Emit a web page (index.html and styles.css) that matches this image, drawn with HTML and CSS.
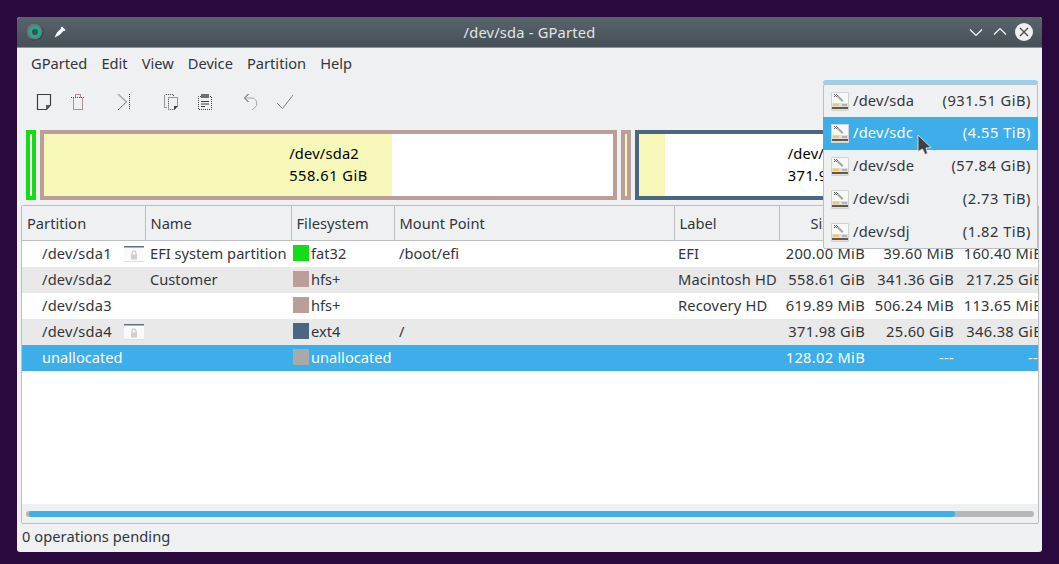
FILE: index.html
```html
<!doctype html>
<html lang="en">
  <head>
    <meta charset="utf-8">
    <title>/dev/sda - GParted</title>
    <link rel="stylesheet" href="styles.css">
  </head>
  <body>

    <svg class="defs">
      <defs>
        <symbol id="drive" viewBox="0 0 18 19">
          <rect x="0" y="0" width="18" height="19" rx="1" fill="#dfe0e0"/>
          <rect x="1" y="1" width="16" height="10" fill="#f8f8f8"/>
          <rect x="0.5" y="0.5" width="17" height="18" rx="1" fill="none" stroke="#cfd1d2"/>
          <path d="M6 5l1.500-1.500 5 5-1.500 1.500z" fill="#a3a7aa"/>
          <path d="M3 2h1v1H3zM5 2h1v1H5zM4 3h1v1H4zM3 4h1v1H3zM5 4h1v1H5zM6 3h1v1H6z" fill="#5a5e61"/>
          <rect x="2" y="11.500" width="6" height="2.500" fill="#f7c56d"/>
          <rect x="11" y="12" width="5" height="2" fill="#b0b3b3"/>
          <rect x="1" y="15" width="16" height="2" fill="#66583f"/>
        </symbol>
        <symbol id="lock" viewBox="0 0 20 16">
          <rect x="0" y="1" width="20" height="15" fill="#fafafa"/>
          <rect x="0" y="15" width="20" height="1" fill="#dcdcdc"/>
          <rect x="0" y="0" width="20" height="1.500" fill="#5d7286"/>
          <path d="M8 9V7a2 2 0 0 1 4 0v2" fill="none" stroke="#bdbdbd"/>
          <rect x="7" y="8.500" width="6" height="5" fill="#cfcfcf"/>
        </symbol>
      </defs>
    </svg>

    <div class="window">

      <header class="titlebar">
        <div class="titlebar-left">
          <svg class="app-icon" width="18" height="18" viewBox="0 0 18 18">
            <path d="M9 .5a8.500 8.500 0 1 1-6 14.500 8.500 8.500 0 0 1 6-14.500z" fill="#3b4146"/>
            <circle cx="8.500" cy="8.500" r="8" fill="#6d7479"/>
            <circle cx="9" cy="9" r="4.600" fill="none" stroke="#1cb08a" stroke-width="3"/>
            <circle cx="9" cy="9" r="3" fill="#3d5257"/>
          </svg>
          <svg class="pin-icon" width="12" height="12" viewBox="0 0 12 12">
            <path d="M.5 11.500L3 6.500 7 2.500 7 1.500 8 .5 11.500 4 10.500 5 9.500 5 5.500 9z" fill="#fcfcfc"/>
          </svg>
        </div>
        <div class="title">/dev/sda - GParted</div>
        <div class="titlebar-buttons">
          <svg class="btn-down" width="14" height="14" viewBox="0 0 14 14"><path d="M1 4.500l6 6 6-6" fill="none" stroke="#fcfcfc" stroke-width="1.100"/></svg>
          <svg width="14" height="14" viewBox="0 0 14 14"><path d="M1 9.500l6-6 6 6" fill="none" stroke="#fcfcfc" stroke-width="1.100"/></svg>
          <svg width="18" height="18" viewBox="0 0 18 18"><circle cx="9" cy="9" r="9" fill="#eff0f1"/><path d="M5 5l8 8M13 5l-8 8" stroke="#475057" stroke-width="1.400"/></svg>
        </div>
      </header>

      <nav class="menubar">
        <span>GParted</span>
        <span>Edit</span>
        <span>View</span>
        <span>Device</span>
        <span>Partition</span>
        <span>Help</span>
      </nav>

      <div class="toolbar">
        <div class="tool"><svg width="16" height="16" viewBox="0 0 16 16"><path d="M1.500.5h13v10.500l-4 4.500h-9z" fill="none" stroke="#3a3f44" stroke-width="1.200"/><path d="M10 16v-5h5z" fill="#55595d"/></svg></div>
        <div class="tool"><svg width="16" height="16" viewBox="0 0 16 16"><path d="M3.500 4.500v11h9v-11M1 3.500h14M5.500 3.500v-3h5v3" fill="none" stroke="#7a2a38" stroke-dasharray="1 1"/></svg></div>
        <div class="tool-sep"></div>
        <div class="tool"><svg width="16" height="16" viewBox="0 0 16 16"><path d="M2 0l8.500 8" fill="none" stroke="#a6a8aa" stroke-width="1.500"/><path d="M10.500 8L2 16" fill="none" stroke="#3a3f44" stroke-dasharray="1.500 .5"/><path d="M13.500 0v16" stroke="#3a3f44" stroke-dasharray="1 1"/></svg></div>
        <div class="tool-sep sep-wide"></div>
        <div class="tool"><svg width="16" height="16" viewBox="0 0 16 16"><path d="M3.500 13.500h-2v-12l1-1h8v2M5.500 3.500h9v9l-3 3h-6z" fill="none" stroke="#3a3f44" stroke-dasharray="1 1"/><path d="M11 16v-4h4z" fill="#3a3f44"/></svg></div>
        <div class="tool"><svg width="16" height="16" viewBox="0 0 16 16"><path d="M4 2.500H1.500v13h13v-13H12" fill="none" stroke="#3a3f44" stroke-dasharray="1 1"/><rect x="4" y="0" width="8" height="4" fill="#6d7175"/><path d="M4 7.500h8M4 10h8M4 12.500h4" stroke="#3a3f44"/></svg></div>
        <div class="tool-sep"></div>
        <div class="tool"><svg width="16" height="16" viewBox="0 0 16 16"><path d="M5.500 0L1.500 4 5.500 8" fill="none" stroke="#3a3f44"/><path d="M2 4h6a5.500 5.500 0 0 1 3.500 10L9 16" fill="none" stroke="#a6a8aa"/></svg></div>
        <div class="tool"><svg width="16" height="16" viewBox="0 0 16 16"><path d="M0 9l5.500 5.500L16 1" fill="none" stroke="#7d8084"/></svg></div>
      </div>

      <div class="diskbar">
        <div class="part part-fat part-sda1"></div>
        <div class="part part-hfs part-sda2">
          <div class="part-fill part-used-a"></div>
          <div class="part-text"><span class="part-name">/dev/sda2</span><br><span class="part-size">558.61 GiB</span></div>
        </div>
        <div class="part part-hfs part-sda3"><div class="part-fill part-used-all"></div></div>
        <div class="part part-ext part-sda4">
          <div class="part-fill part-used-b"></div>
          <div class="part-text"><span class="part-name">/dev/sda4</span><br><span class="part-size">371.98 GiB</span></div>
        </div>
      </div>

      <div class="listframe">
        <div class="listview">
          <table class="parts">
            <colgroup>
              <col class="c-part"><col class="c-name"><col class="c-fs"><col class="c-mount"><col class="c-label"><col class="c-size-first"><col class="c-size"><col class="c-size">
            </colgroup>
            <thead>
              <tr>
                <th>Partition</th><th>Name</th><th>Filesystem</th><th>Mount Point</th><th>Label</th>
                <th class="center">Size</th><th class="center">Used</th><th class="center">Unused</th>
              </tr>
            </thead>
            <tbody>
              <tr>
                <td><div class="partcell">/dev/sda1<svg class="lock" width="20" height="16"><use href="#lock"/></svg></div></td>
                <td>EFI system partition</td>
                <td><div class="fscell"><i class="swatch sw-fat"></i>fat32</div></td>
                <td>/boot/efi</td><td class="labelcell">EFI</td>
                <td class="num">200.00 MiB</td><td class="num">39.60 MiB</td><td class="num">160.40 MiB</td>
              </tr>
              <tr>
                <td><div class="partcell">/dev/sda2</div></td>
                <td>Customer</td>
                <td><div class="fscell"><i class="swatch sw-hfs"></i>hfs+</div></td>
                <td></td><td class="labelcell">Macintosh HD</td>
                <td class="num">558.61 GiB</td><td class="num">341.36 GiB</td><td class="num">217.25 GiB</td>
              </tr>
              <tr>
                <td><div class="partcell">/dev/sda3</div></td>
                <td></td>
                <td><div class="fscell"><i class="swatch sw-hfs"></i>hfs+</div></td>
                <td></td><td class="labelcell">Recovery HD</td>
                <td class="num">619.89 MiB</td><td class="num">506.24 MiB</td><td class="num">113.65 MiB</td>
              </tr>
              <tr>
                <td><div class="partcell">/dev/sda4<svg class="lock" width="20" height="16"><use href="#lock"/></svg></div></td>
                <td></td>
                <td><div class="fscell"><i class="swatch sw-ext"></i>ext4</div></td>
                <td>/</td><td class="labelcell"></td>
                <td class="num">371.98 GiB</td><td class="num">25.60 GiB</td><td class="num">346.38 GiB</td>
              </tr>
              <tr class="selected">
                <td><div class="partcell">unallocated</div></td>
                <td></td>
                <td><div class="fscell"><i class="swatch sw-un"></i>unallocated</div></td>
                <td></td><td class="labelcell"></td>
                <td class="num">128.02 MiB</td><td class="num">---</td><td class="num">---</td>
              </tr>
            </tbody>
          </table>
        </div>
        <div class="hscroll"><div class="hscroll-track"><div class="hscroll-thumb"></div></div></div>
      </div>

      <div class="status">0 operations pending</div>

      <div class="devices">
        <div class="devices-focus"></div>
        <div class="devices-list">
          <div class="device"><svg width="18" height="19"><use href="#drive"/></svg><span class="dev-name">/dev/sda</span><span class="dev-size">(931.51 GiB)</span></div>
          <div class="device active"><svg width="18" height="19"><use href="#drive"/></svg><span class="dev-name">/dev/sdc</span><span class="dev-size">(4.55 TiB)</span></div>
          <div class="device"><svg width="18" height="19"><use href="#drive"/></svg><span class="dev-name">/dev/sde</span><span class="dev-size">(57.84 GiB)</span></div>
          <div class="device"><svg width="18" height="19"><use href="#drive"/></svg><span class="dev-name">/dev/sdi</span><span class="dev-size">(2.73 TiB)</span></div>
          <div class="device"><svg width="18" height="19"><use href="#drive"/></svg><span class="dev-name">/dev/sdj</span><span class="dev-size">(1.82 TiB)</span></div>
        </div>
        <svg class="cursor" width="15" height="22" viewBox="0 0 15 22">
          <path d="M1 1l13 12.500-5 .500 1.500 5.500-2.500 1-2.500-5.500-4.500 2.500z" fill="#3f4245" stroke="#eff0f1" stroke-width=".8"/>
        </svg>
      </div>

    </div>

  </body>
</html>
```

FILE: styles.css
```css
* {
  box-sizing: border-box;
}

html, body {
  height: 100%;
}

body {
  margin: 0;
  padding: 17px;
  background: #2a0a3c;
  font-family: "Noto Sans", sans-serif;
  font-size: 14.67px;
  color: #31363b;
  overflow: hidden;
}

.defs {
  display: none;
}

.window {
  position: relative;
  width: 1025px;
  height: 535px;
  background: #eff0f1;
  border-radius: 3px;
  overflow: hidden;
  display: flex;
  flex-direction: column;
}

/* Title bar */
.titlebar {
  height: 31px;
  flex: none;
  display: flex;
  align-items: center;
  justify-content: space-between;
  padding: 0 9px;
  background: linear-gradient(#58646b, #465056);
  border-bottom: 1px solid #3daee9;
}
.titlebar-left, .titlebar-buttons {
  width: 200px;
  display: flex;
  align-items: center;
}
.titlebar-left {
  gap: 10px;
}
.titlebar-buttons {
  justify-content: flex-end;
  gap: 8px;
}
.btn-down {
  margin-right: 2px;
}
.title {
  color: #e3e5e7;
  letter-spacing: .2px;
}

/* Menu */
.menubar {
  height: 30px;
  flex: none;
  display: flex;
  align-items: center;
  padding-left: 14px;
  gap: 14px;
}

/* Toolbar */
.toolbar {
  height: 48px;
  flex: none;
  display: flex;
  align-items: center;
  padding-left: 10px;
}
.tool {
  width: 34px;
  display: flex;
  justify-content: center;
}
.tool-sep {
  width: 12px;
}
.sep-wide {
  width: 13px;
}

/* Graphic of the disk */
.diskbar {
  height: 70px;
  flex: none;
  margin: 4px 8px 0 9px;
  display: flex;
  gap: 4px;
}
.part {
  position: relative;
  border: 4px solid;
  background: #fff;
  display: flex;
  align-items: center;
  justify-content: center;
}
.part-fat { border-color: #16dc16; }
.part-hfs { border-color: #bc9e99; }
.part-ext { border-color: #4a6680; }
.part-sda1 { width: 10px; }
.part-sda2 { width: 577px; }
.part-sda3 { width: 10px; }
.part-sda4 { width: 384px; }
.part-fill {
  position: absolute;
  left: 0;
  top: 0;
  bottom: 0;
  background: #f7f7b9;
}
.part-used-a { width: 348px; }
.part-used-b { width: 26px; }
.part-used-all { width: 2px; }
.part-text {
  position: relative;
  line-height: 22px;
  padding-bottom: 2px;
  color: #000;
}
.part-name {
  letter-spacing: .2px;
}
.part-size {
  letter-spacing: .5px;
}

/* Partition list */
.listframe {
  flex: 1;
  margin: 5px 3px 0 4px;
  border: 1px solid #bcbebf;
  border-radius: 2px;
  display: flex;
  flex-direction: column;
  min-height: 0;
}
.listview {
  flex: 1;
  background: #fff;
  overflow: hidden;
}
.parts {
  table-layout: fixed;
  width: 1025px;
  border-collapse: collapse;
}
.c-part { width: 123px; }
.c-name { width: 146px; }
.c-fs { width: 103px; }
.c-mount { width: 280px; }
.c-label { width: 105px; }
.c-size-first { width: 90px; }
.c-size { width: 89px; }

.parts th {
  height: 34px;
  padding: 0 5px;
  font-weight: normal;
  text-align: left;
  background: #eff0f1;
  border-right: 1px solid #bcbebf;
  border-bottom: 1px solid #bcbebf;
}
.parts th.center {
  text-align: center;
}
.parts td {
  height: 26px;
  padding: 0 4px 2px 5px;
  white-space: nowrap;
  overflow: hidden;
}
.parts tbody tr:nth-child(even) {
  background: #e9e9e9;
}
.parts tr.selected {
  background: #3daee9;
  color: #fcfcfc;
}
.parts td.num {
  text-align: right;
  letter-spacing: .3px;
}
.parts td.labelcell {
  padding-left: 4px;
  letter-spacing: .15px;
}
.parts td:first-child {
  padding: 0 0 2px;
}
.parts td:nth-child(3) {
  padding: 0 0 0 2px;
}
.partcell {
  display: flex;
  align-items: center;
  padding-left: 20px;
  position: relative;
  letter-spacing: .2px;
}
.selected .partcell {
  letter-spacing: 0;
}
.lock {
  position: absolute;
  left: 102px;
  top: 3px;
}
.fscell {
  display: flex;
  align-items: center;
  gap: 2px;
  height: 26px;
  padding-bottom: 2px;
}
.fscell .swatch {
  align-self: flex-start;
  margin-top: 4px;
}
.swatch {
  width: 16px;
  height: 16px;
  flex: none;
}
.sw-fat { background: #16dc16; }
.sw-hfs { background: #bc9e99; }
.sw-ext { background: #4a6680; }
.sw-un { background: #a9a9a9; }

.hscroll {
  height: 19px;
  flex: none;
  padding: 7px 4px 0;
}
.hscroll-track {
  height: 6px;
  border-radius: 3px;
  background: #b5b8b8;
  padding-left: 3px;
}
.hscroll-thumb {
  width: 926px;
  height: 6px;
  border-radius: 3px;
  background: #3daee9;
}

.status {
  height: 28px;
  flex: none;
  padding-left: 5px;
  line-height: 25px;
  letter-spacing: .05px;
}

/* Device chooser, open over the window */
.devices {
  position: absolute;
  top: 63px;
  right: 4px;
  width: 215px;
}
.devices-focus {
  height: 4px;
  border-radius: 3px 3px 0 0;
  background: #93d3f1;
}
.devices-list {
  background: #eff0f1;
  border: 1px solid #bcbebf;
  border-radius: 2px;
}
.device {
  height: 33px;
  display: flex;
  align-items: center;
  padding: 0 6px 0 7px;
}
.device span {
  padding-bottom: 3px;
}
.device:first-child, .device:last-child {
  height: 32px;
}
.device.active {
  margin: 0 -1px;
  padding: 0 7px 0 8px;
  background: #3daee9;
  color: #fcfcfc;
}
.dev-name {
  flex: 1;
  margin-left: 4px;
  letter-spacing: .2px;
}
.dev-size {
  letter-spacing: .5px;
}
.cursor {
  position: absolute;
  left: 94px;
  top: 54px;
}
```
